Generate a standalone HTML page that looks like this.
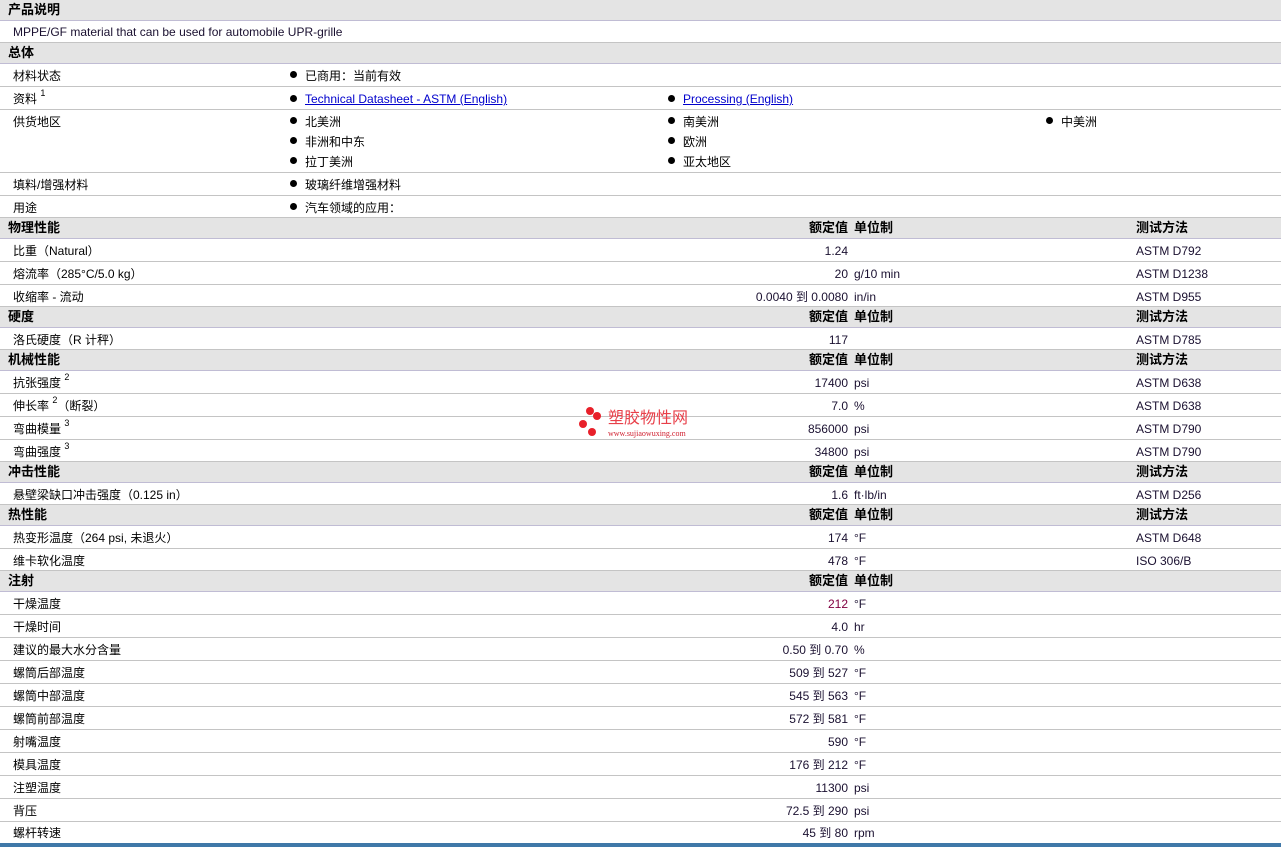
<!DOCTYPE html>
<html><head><meta charset="utf-8"><style>
*{margin:0;padding:0;box-sizing:border-box}
body{width:1281px;height:847px;overflow:hidden;background:#fff;font-family:"Liberation Sans","Noto Sans CJK SC",sans-serif;font-size:12px;color:#000;position:relative;line-height:14px}
.r{position:absolute;left:0;width:1281px;border-bottom:1px solid #c4c4c4}
.h{background:#e4e4e4;border-bottom:1px solid #c0bcd4;font-weight:bold;font-size:13px}
.t{position:absolute;white-space:nowrap;line-height:14px}
.v{position:absolute;right:433px;white-space:nowrap;color:#1a1030;line-height:14px}
.u{position:absolute;left:854px;white-space:nowrap;color:#1a1030;line-height:14px}
.m{position:absolute;left:1136px;white-space:nowrap;color:#1a1030;line-height:14px}
.b{position:absolute;width:7px;height:7px;border-radius:50%;background:#000}
a{color:#00c;text-decoration:underline}
sup{font-size:9px;vertical-align:top;position:relative;top:-3px;line-height:9px}
.blue{color:#1a1030}
</style></head><body>

<div class="r h" style="top:0;height:21px"><span class="t" style="left:8px;top:3px">产品说明</span></div>
<div class="r" style="top:21px;height:22px"><span class="t blue" style="left:13px;top:4px">MPPE/GF material that can be used for automobile UPR-grille</span></div>
<div class="r h" style="top:43px;height:21px"><span class="t" style="left:8px;top:3px">总体</span></div>
<div class="r" style="top:64px;height:23px"><span class="t" style="left:13px;top:5px">材料状态</span><i class="b" style="left:290px;top:7px"></i><span class="t" style="left:305px;top:5px">已商用：当前有效</span></div>
<div class="r" style="top:87px;height:23px"><span class="t" style="left:13px;top:5px">资料 <sup>1</sup></span><i class="b" style="left:290px;top:8px"></i><span class="t" style="left:305px;top:5px"><a>Technical Datasheet - ASTM (English)</a></span><i class="b" style="left:668px;top:8px"></i><span class="t" style="left:683px;top:5px"><a>Processing (English)</a></span></div>
<div class="r" style="top:110px;height:63px"><span class="t" style="left:13px;top:5px">供货地区</span>
<i class="b" style="left:290px;top:7px"></i><span class="t" style="left:305px;top:5px">北美洲</span>
<i class="b" style="left:290px;top:27px"></i><span class="t" style="left:305px;top:25px">非洲和中东</span>
<i class="b" style="left:290px;top:47px"></i><span class="t" style="left:305px;top:45px">拉丁美洲</span>
<i class="b" style="left:668px;top:7px"></i><span class="t" style="left:683px;top:5px">南美洲</span>
<i class="b" style="left:668px;top:27px"></i><span class="t" style="left:683px;top:25px">欧洲</span>
<i class="b" style="left:668px;top:47px"></i><span class="t" style="left:683px;top:45px">亚太地区</span>
<i class="b" style="left:1046px;top:7px"></i><span class="t" style="left:1061px;top:5px">中美洲</span></div>
<div class="r" style="top:173px;height:23px"><span class="t" style="left:13px;top:5px">填料/增强材料</span><i class="b" style="left:290px;top:7px"></i><span class="t" style="left:305px;top:5px">玻璃纤维增强材料</span></div>
<div class="r" style="top:196px;height:22px"><span class="t" style="left:13px;top:5px">用途</span><i class="b" style="left:290px;top:7px"></i><span class="t" style="left:305px;top:5px">汽车领域的应用：</span></div>

<div class="r h" style="top:218px;height:21px"><span class="t" style="left:8px;top:3px">物理性能</span><span class="t" style="right:433px;top:3px">额定值</span><span class="t" style="left:854px;top:3px">单位制</span><span class="t" style="left:1136px;top:3px">测试方法</span></div>
<div class="r" style="top:239px;height:23px"><span class="t" style="left:13px;top:5px">比重（Natural）</span><span class="v" style="top:5px">1.24</span><span class="m" style="top:5px">ASTM D792</span></div>
<div class="r" style="top:262px;height:23px"><span class="t" style="left:13px;top:5px">熔流率（285°C/5.0 kg）</span><span class="v" style="top:5px">20</span><span class="u" style="top:5px">g/10 min</span><span class="m" style="top:5px">ASTM D1238</span></div>
<div class="r" style="top:285px;height:22px"><span class="t" style="left:13px;top:5px">收缩率 - 流动</span><span class="v" style="top:5px">0.0040 到 0.0080</span><span class="u" style="top:5px">in/in</span><span class="m" style="top:5px">ASTM D955</span></div>

<div class="r h" style="top:307px;height:21px"><span class="t" style="left:8px;top:3px">硬度</span><span class="t" style="right:433px;top:3px">额定值</span><span class="t" style="left:854px;top:3px">单位制</span><span class="t" style="left:1136px;top:3px">测试方法</span></div>
<div class="r" style="top:328px;height:22px"><span class="t" style="left:13px;top:5px">洛氏硬度（R 计秤）</span><span class="v" style="top:5px">117</span><span class="m" style="top:5px">ASTM D785</span></div>

<div class="r h" style="top:350px;height:21px"><span class="t" style="left:8px;top:3px">机械性能</span><span class="t" style="right:433px;top:3px">额定值</span><span class="t" style="left:854px;top:3px">单位制</span><span class="t" style="left:1136px;top:3px">测试方法</span></div>
<div class="r" style="top:371px;height:23px"><span class="t" style="left:13px;top:5px">抗张强度 <sup>2</sup></span><span class="v" style="top:5px">17400</span><span class="u" style="top:5px">psi</span><span class="m" style="top:5px">ASTM D638</span></div>
<div class="r" style="top:394px;height:23px"><span class="t" style="left:13px;top:5px">伸长率 <sup>2</sup>（断裂）</span><span class="v" style="top:5px">7.0</span><span class="u" style="top:5px">%</span><span class="m" style="top:5px">ASTM D638</span></div>
<div class="r" style="top:417px;height:23px"><span class="t" style="left:13px;top:5px">弯曲模量 <sup>3</sup></span><span class="v" style="top:5px">856000</span><span class="u" style="top:5px">psi</span><span class="m" style="top:5px">ASTM D790</span></div>
<div class="r" style="top:440px;height:22px"><span class="t" style="left:13px;top:5px">弯曲强度 <sup>3</sup></span><span class="v" style="top:5px">34800</span><span class="u" style="top:5px">psi</span><span class="m" style="top:5px">ASTM D790</span></div>

<div class="r h" style="top:462px;height:21px"><span class="t" style="left:8px;top:3px">冲击性能</span><span class="t" style="right:433px;top:3px">额定值</span><span class="t" style="left:854px;top:3px">单位制</span><span class="t" style="left:1136px;top:3px">测试方法</span></div>
<div class="r" style="top:483px;height:22px"><span class="t" style="left:13px;top:5px">悬壁梁缺口冲击强度（0.125 in）</span><span class="v" style="top:5px">1.6</span><span class="u" style="top:5px">ft·lb/in</span><span class="m" style="top:5px">ASTM D256</span></div>

<div class="r h" style="top:505px;height:21px"><span class="t" style="left:8px;top:3px">热性能</span><span class="t" style="right:433px;top:3px">额定值</span><span class="t" style="left:854px;top:3px">单位制</span><span class="t" style="left:1136px;top:3px">测试方法</span></div>
<div class="r" style="top:526px;height:23px"><span class="t" style="left:13px;top:5px">热变形温度（264 psi, 未退火）</span><span class="v" style="top:5px">174</span><span class="u" style="top:5px">°F</span><span class="m" style="top:5px">ASTM D648</span></div>
<div class="r" style="top:549px;height:22px"><span class="t" style="left:13px;top:5px">维卡软化温度</span><span class="v" style="top:5px">478</span><span class="u" style="top:5px">°F</span><span class="m" style="top:5px">ISO 306/B</span></div>

<div class="r h" style="top:571px;height:21px"><span class="t" style="left:8px;top:3px">注射</span><span class="t" style="right:433px;top:3px">额定值</span><span class="t" style="left:854px;top:3px">单位制</span></div>
<div class="r" style="top:592px;height:23px"><span class="t" style="left:13px;top:5px">干燥温度</span><span class="v" style="top:5px;color:#800040">212</span><span class="u" style="top:5px">°F</span></div>
<div class="r" style="top:615px;height:23px"><span class="t" style="left:13px;top:5px">干燥时间</span><span class="v" style="top:5px">4.0</span><span class="u" style="top:5px">hr</span></div>
<div class="r" style="top:638px;height:23px"><span class="t" style="left:13px;top:5px">建议的最大水分含量</span><span class="v" style="top:5px">0.50 到 0.70</span><span class="u" style="top:5px">%</span></div>
<div class="r" style="top:661px;height:23px"><span class="t" style="left:13px;top:5px">螺筒后部温度</span><span class="v" style="top:5px">509 到 527</span><span class="u" style="top:5px">°F</span></div>
<div class="r" style="top:684px;height:23px"><span class="t" style="left:13px;top:5px">螺筒中部温度</span><span class="v" style="top:5px">545 到 563</span><span class="u" style="top:5px">°F</span></div>
<div class="r" style="top:707px;height:23px"><span class="t" style="left:13px;top:5px">螺筒前部温度</span><span class="v" style="top:5px">572 到 581</span><span class="u" style="top:5px">°F</span></div>
<div class="r" style="top:730px;height:23px"><span class="t" style="left:13px;top:5px">射嘴温度</span><span class="v" style="top:5px">590</span><span class="u" style="top:5px">°F</span></div>
<div class="r" style="top:753px;height:23px"><span class="t" style="left:13px;top:5px">模具温度</span><span class="v" style="top:5px">176 到 212</span><span class="u" style="top:5px">°F</span></div>
<div class="r" style="top:776px;height:23px"><span class="t" style="left:13px;top:5px">注塑温度</span><span class="v" style="top:5px">11300</span><span class="u" style="top:5px">psi</span></div>
<div class="r" style="top:799px;height:23px"><span class="t" style="left:13px;top:5px">背压</span><span class="v" style="top:5px">72.5 到 290</span><span class="u" style="top:5px">psi</span></div>
<div class="r" style="top:822px;height:21px;border:none"><span class="t" style="left:13px;top:4px">螺杆转速</span><span class="v" style="top:4px">45 到 80</span><span class="u" style="top:4px">rpm</span></div>
<div style="position:absolute;left:0;top:843px;width:1281px;height:4px;background:#3f78a8"></div>

<div style="position:absolute;left:578px;top:406px;width:130px;height:36px">
<i style="position:absolute;left:8px;top:1px;width:8px;height:8px;border-radius:50%;background:#e8202a"></i>
<i style="position:absolute;left:15px;top:6px;width:8px;height:8px;border-radius:50%;background:#e8202a"></i>
<i style="position:absolute;left:1px;top:14px;width:8px;height:8px;border-radius:50%;background:#e8202a"></i>
<i style="position:absolute;left:10px;top:22px;width:8px;height:8px;border-radius:50%;background:#e8202a"></i>
<span style="position:absolute;left:30px;top:4px;font-size:16px;line-height:18px;color:#e8404a;white-space:nowrap">塑胶物性网</span>
<span style="position:absolute;left:30px;top:23px;font-size:8px;line-height:9px;color:#d02030;font-family:'Liberation Serif',serif;white-space:nowrap">www.sujiaowuxing.com</span>
</div>
</body></html>
